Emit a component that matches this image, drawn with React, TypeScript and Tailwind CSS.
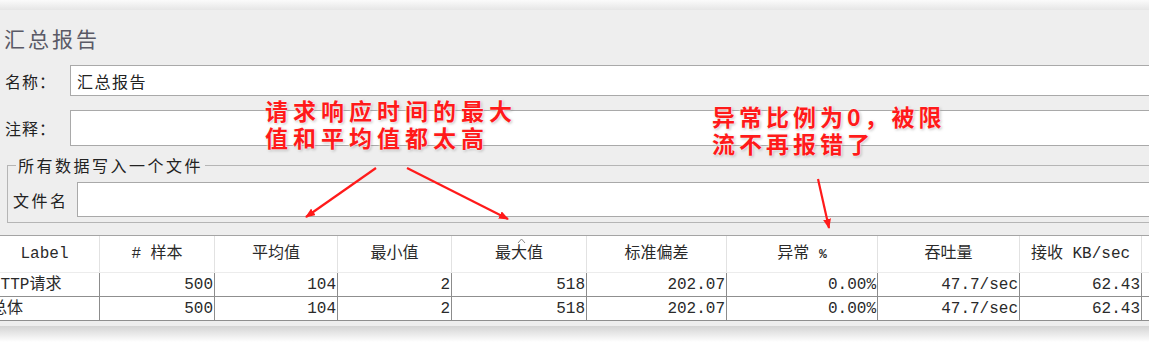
import React from "react";

const cjk = "font-['Noto_Sans_CJK_SC','Noto_Sans',sans-serif]";
const mono = "font-['Liberation_Mono','Noto_Sans_CJK_SC',monospace]";

const cols = "grid grid-cols-[110px_115px_123px_114px_135px_140px_151px_142px_122px_140px]";

const headers = ["Label", "# 样本", "平均值", "最小值", "最大值", "标准偏差", "异常 %", "吞吐量", "接收 KB/sec", ""];
const rows = [
  ["HTTP请求", "500", "104", "2", "518", "202.07", "0.00%", "47.7/sec", "62.43", ""],
  ["总体", "500", "104", "2", "518", "202.07", "0.00%", "47.7/sec", "62.43", ""],
];

function Field({ label, value, h }: { label: string; value?: string; h: string }) {
  return (
    <div className="flex items-center">
      <div className={`w-[70px] pl-[5px] text-[16px] tracking-[1px] text-[#222] ${cjk}`}>{label}</div>
      <div className={`flex-1 ${h} bg-white border border-[#a9a9a9] border-r-0 flex items-center pl-[6px] text-[16px] tracking-[1.5px] text-[#222] ${cjk}`}>
        {value}
      </div>
    </div>
  );
}

export default function App() {
  return (
    <div className="relative w-[1149px] h-[342px] overflow-hidden bg-white">
      <div className="h-[10px] bg-gradient-to-b from-[#fbfbfb] to-[#e6e6e6]" />
      <div className="w-[1180px] bg-[#eeeeee] h-[316px]">
        <div className={`h-[48px] pt-[16px] pl-[4px] leading-[24px] text-[21px] tracking-[3px] text-[#5a5a66] ${cjk}`}>汇总报告</div>
        <div className="mt-[7px]">
          <Field label="名称：" value="汇总报告" h="h-[31px]" />
        </div>
        <div className="mt-[14px]">
          <Field label="注释：" h="h-[36px]" />
        </div>
        <fieldset className="mt-[9px] ml-[7px] border border-[#b5b5b5] border-r-0 pb-[5px]">
          <legend className={`ml-[8px] px-[2px] h-[20px] leading-[20px] text-[16px] tracking-[2.5px] text-[#222] ${cjk}`}>所有数据写入一个文件</legend>
          <div className="flex items-center pt-[7px]">
            <div className={`w-[69px] pl-[5px] text-[16px] tracking-[2.5px] text-[#222] ${cjk}`}>文件名</div>
            <div className="flex-1 h-[35px] bg-white border border-[#a9a9a9] border-r-0" />
          </div>
        </fieldset>
        <div className={`mt-[12px] -ml-[10px] border-t border-[#a4a4a4] ${mono} text-[16px] text-[#2a2a2a]`}>
          <div className={`${cols} h-[37px] bg-white border-b border-[#ececec]`}>
            {headers.map((h, i) => (
              <div key={i} className="relative flex items-center justify-center border-r border-[#e2e2e2]">
                {i === 4 && (
                  <svg className="absolute left-[65px] top-[2px]" width="9" height="6" viewBox="0 0 9 6">
                    <path d="M1 5 L4.5 1 L8 5" fill="none" stroke="#888" strokeWidth="1" />
                  </svg>
                )}
                {i === 6 ? (
                  <span>
                    异常&nbsp;<span className="text-[13px] font-bold">%</span>
                  </span>
                ) : (
                  <span>{h}</span>
                )}
              </div>
            ))}
          </div>
          {rows.map((r, ri) => (
            <div key={ri} className={`${cols} h-[24px] bg-white border-b border-[#8f8f8f]`}>
              {r.map((c, ci) => (
                <div
                  key={ci}
                  className={`flex items-center leading-[22px] border-r border-[#8c8c8c] ${ci === 0 ? "justify-start pl-[1px]" : "justify-end pr-[1px]"}`}
                >
                  {c}
                </div>
              ))}
            </div>
          ))}
        </div>
        <div className="h-[4px]" />
      </div>
      <div className="h-[16px] bg-gradient-to-b from-[#d4d4d4] to-[#ffffff]" />

      {/* annotations */}
      <div
        className={`absolute left-[265px] top-[97px] text-[23px] leading-[27px] tracking-[5px] font-semibold text-[#ff1a1a] ${cjk} [text-shadow:0_0_2px_#fff,0_0_3px_#fff,1px_1px_3px_rgba(0,0,0,0.35)]`}
      >
        <div>请求响应时间的最大</div>
        <div>值和平均值都太高</div>
      </div>
      <div
        className={`absolute left-[712px] top-[103px] text-[23px] leading-[27px] tracking-[4px] font-semibold text-[#ff1a1a] ${cjk} [text-shadow:0_0_2px_#fff,0_0_3px_#fff,1px_1px_3px_rgba(0,0,0,0.35)]`}
      >
        <div>
          异常比例为<span className="font-bold">0</span>，被限
        </div>
        <div>流不再报错了</div>
      </div>
      <svg className="absolute left-0 top-0" width="1149" height="342" viewBox="0 0 1149 342">
        <defs>
          <marker id="ah" markerWidth="10" markerHeight="8" refX="9" refY="4" orient="auto" markerUnits="userSpaceOnUse">
            <path d="M0 0 L10 4 L0 8 Z" fill="#ff1a1a" />
          </marker>
        </defs>
        <g stroke="#ff1a1a" strokeWidth="2.2" fill="none" markerEnd="url(#ah)">
          <line x1="376" y1="168" x2="306" y2="217" />
          <line x1="407" y1="168" x2="508" y2="219" />
          <line x1="818" y1="179" x2="829" y2="228" />
        </g>
      </svg>
    </div>
  );
}
